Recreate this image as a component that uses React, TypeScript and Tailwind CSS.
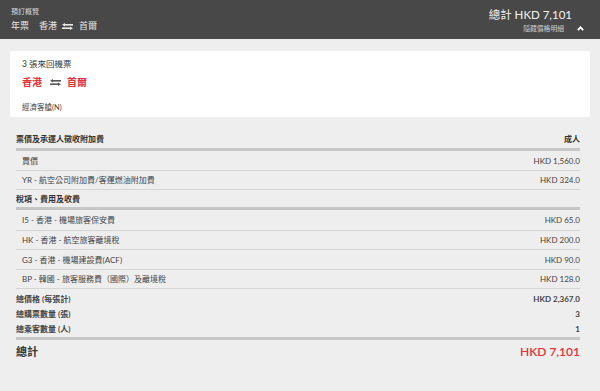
import React from "react";

const font = { fontFamily: "Lato, 'Noto Sans CJK TC', sans-serif" };

function SwapIcon({ color }: { color: string }) {
  return (
    <svg width="11" height="7" viewBox="0 0 11 7" fill={color}>
      <rect x="2" y="1" width="9" height="1.6" />
      <polygon points="0,1.8 3,0 3,3.6" />
      <rect x="0" y="4.4" width="9" height="1.6" />
      <polygon points="11,5.2 8,3.4 8,7" />
    </svg>
  );
}

function Row({ label, value, h = "h-[19px]" }: { label: string; value: string; h?: string }) {
  return (
    <div className={`flex items-center justify-between border-b border-[#d6d6d6] pl-[6px] text-[8px] text-[#444] ${h}`}>
      <span>{label}</span>
      <span>{value}</span>
    </div>
  );
}

function SectionHead({ label, right, h }: { label: string; right?: string; h: string }) {
  return (
    <div className={`flex items-center justify-between border-b-[3px] border-[#c6c6c6] text-[8px] font-semibold text-[#333] ${h}`}>
      <span>{label}</span>
      {right && <span>{right}</span>}
    </div>
  );
}

function SumRow({ label, value }: { label: string; value: string }) {
  return (
    <div className="flex h-[15px] items-center justify-between text-[8px] font-bold text-[#444]">
      <span>{label}</span>
      <span>{value}</span>
    </div>
  );
}

export default function App() {
  return (
    <div className="h-[391px] w-[600px] bg-[#eeeeee]" style={font}>
      <div className="flex h-[39px] items-start justify-between bg-[#484848] pl-[11px] pr-[28px]">
        <div className="pt-[6px]">
          <div className="text-[7px] leading-[10px] text-[#d8d8d8]">預訂概覽</div>
          <div className="mt-[4px] flex items-center text-[9px] leading-[12px] text-[#e6e6e6]">
            <span>年票</span>
            <span className="ml-[10px]">香港</span>
            <span className="ml-[5px] mr-[6px] flex items-center"><SwapIcon color="#e8e8e8" /></span>
            <span>首爾</span>
          </div>
        </div>
        <div className="flex flex-col items-end pt-[8px]">
          <div className="text-[11.5px] leading-[14px] text-[#f2f2f2]">總計 HKD 7,101</div>
          <div className="mt-[2px] flex items-center text-[6.8px] leading-[9px] text-[#cfcfcf]">
            <span>隱藏價格明細</span>
            <svg className="ml-[13px] mr-[-12px]" width="7" height="5" viewBox="0 0 7 5">
              <path d="M0.8 4.2 L3.5 1.3 L6.2 4.2" stroke="#fff" strokeWidth="1.8" fill="none" />
            </svg>
          </div>
        </div>
      </div>

      <div className="mx-[10px] mt-[12px] h-[66px] bg-white px-[12px] pt-[7px]">
        <div className="text-[8.5px] leading-[12px] text-[#333]">3 張來回機票</div>
        <div className="mt-[6px] flex items-center text-[10px] font-semibold leading-[13px] text-[#e0333c]">
          <span>香港</span>
          <span className="ml-[8px] mr-[6px] flex items-center"><SwapIcon color="#555" /></span>
          <span>首爾</span>
        </div>
        <div className="mt-[14px] text-[7.5px] leading-[10px] text-[#444]">經濟客艙(N)</div>
      </div>

      <div className="mx-[16px] mt-[13px] w-[564px]">
        <SectionHead label="票價及承運人徵收附加費" right="成人" h="h-[21px]" />
        <Row label="賈價" value="HKD 1,560.0" h="h-[20px]" />
        <Row label="YR - 航空公司附加費/客運燃油附加費" value="HKD 324.0" />
        <SectionHead label="稅項、費用及收費" h="h-[20px]" />
        <Row label="I5 - 香港 - 機場旅客保安費" value="HKD 65.0" h="h-[21px]" />
        <Row label="HK - 香港 - 航空旅客離境稅" value="HKD 200.0" />
        <Row label="G3 - 香港 - 機場建設費(ACF)" value="HKD 90.0" h="h-[20px]" />
        <Row label="BP - 韓國 - 旅客服務費（國際）及離境稅" value="HKD 128.0" />
        <div className="border-b-[3px] border-[#c6c6c6] pb-[1px] pt-[2px]">
          <SumRow label="總價格 (每張計)" value="HKD 2,367.0" />
          <SumRow label="總購票數量 (張)" value="3" />
          <SumRow label="總乘客數量 (人)" value="1" />
        </div>
        <div className="flex h-[24px] items-center justify-between">
          <span className="text-[11px] font-semibold text-[#333]">總計</span>
          <span className="text-[12px] font-semibold text-[#e0333c]">HKD 7,101</span>
        </div>
      </div>
    </div>
  );
}
